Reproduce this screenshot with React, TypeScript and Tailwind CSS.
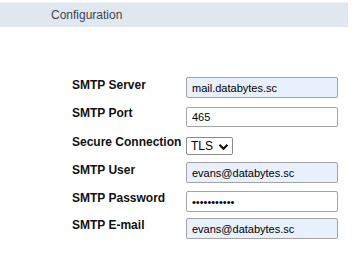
import React from "react";

const font = { fontFamily: '"Liberation Sans", Arial, sans-serif' };

function Field({ value, blue, type = "text", h = "h-[21px]" }: { value: string; blue?: boolean; type?: string; h?: string }) {
  return (
    <input
      readOnly
      type={type}
      value={value}
      className={
        "block w-[152px] border border-[#a3a3a3] rounded-[2px] pl-[5px] text-[11px] text-black outline-none " +
        h +
        " " +
        (blue ? "bg-[#e8f0fe]" : "bg-white")
      }
      style={font}
    />
  );
}

function Label({ children, cls = "" }: { children: React.ReactNode; cls?: string }) {
  return (
    <div className={"w-[114px] shrink-0 text-[12px] font-bold leading-[14px] text-[#111] " + cls}>{children}</div>
  );
}

export default function App() {
  return (
    <div className="w-[362px] h-[266px] bg-white overflow-hidden" style={font}>
      <div className="pt-[2px]">
        <div className="w-[348px] h-[25px] bg-[#e1e7ee] border-t border-[#edf0f4] pl-[51px] text-[12px] leading-[24px] text-[#3d4550]">
          Configuration
        </div>
      </div>
      <div className="mt-[50px] pl-[72px] flex flex-col">
        <div className="flex items-start h-[30px]">
          <Label cls="mt-[1px]">SMTP Server</Label>
          <Field value="mail.databytes.sc" blue />
        </div>
        <div className="flex items-start h-[29px]">
          <Label cls="-mt-[1px]">SMTP Port</Label>
          <Field value="465" h="h-[20px]" />
        </div>
        <div className="flex items-start h-[26px]">
          <Label cls="-mt-[1px]">Secure Connection</Label>
          <div className="mt-[1px] w-[47px] h-[18px] border border-[#8a8a8a] rounded-[2px] bg-white flex items-center pl-[4px] gap-[5px]">
            <span className="text-[12px] leading-[14px] text-black">TLS</span>
            <svg width="11" height="8" viewBox="0 0 11 8" className="mt-[1px]">
              <path d="M1.5 1.8 L5.5 5.8 L9.5 1.8" fill="none" stroke="#111" strokeWidth="2.2" />
            </svg>
          </div>
        </div>
        <div className="flex items-start h-[29px]">
          <Label cls="mt-[1px]">SMTP User</Label>
          <Field value="evans@databytes.sc" blue />
        </div>
        <div className="flex items-start h-[27px]">
          <Label>SMTP Password</Label>
          <Field value="12345678901" type="password" />
        </div>
        <div className="flex items-start h-[27px]">
          <Label>SMTP E-mail</Label>
          <Field value="evans@databytes.sc" blue />
        </div>
      </div>
    </div>
  );
}
